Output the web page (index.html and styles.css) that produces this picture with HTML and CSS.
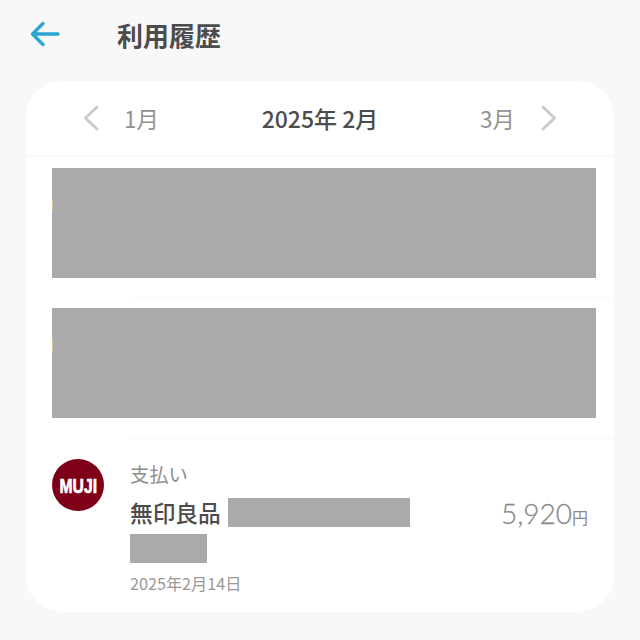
FILE: index.html
```html
<!DOCTYPE html>
<html lang="ja">
<head>
<meta charset="utf-8">
<title>利用履歴</title>
<link rel="stylesheet" href="styles.css">
</head>
<body>
<header class="topbar">
  <svg class="back" width="30" height="26" viewBox="0 0 30 26"><path d="M13 2.5 2.5 13 13 23.500M2.500 13H28"/></svg>
  <h1>利用履歴</h1>
</header>
<main class="card">
  <nav class="months">
    <svg class="chevron" width="16" height="26" viewBox="0 0 16 26"><path d="M14 2 2.500 13 14 24"/></svg>
    <span class="month prev">1月</span>
    <span class="current">2025年 2月</span>
    <span class="month next">3月</span>
    <svg class="chevron" width="16" height="26" viewBox="0 0 16 26"><path d="M2 2 13.500 13 2 24"/></svg>
  </nav>
  <section class="masked"><div class="mask"></div></section>
  <section class="masked"><div class="mask"></div></section>
  <section class="entry">
    <svg class="logo" width="52" height="52" viewBox="0 0 52 52"><circle cx="26" cy="26" r="26"/><text x="7.500" y="33.500" textLength="37.500" lengthAdjust="spacingAndGlyphs">MUJI</text></svg>
    <div class="details">
      <div class="kind">支払い</div>
      <div class="shop"><span>無印良品</span><span class="redact long"></span></div>
      <div class="redact short"></div>
      <div class="date">2025年2月14日</div>
    </div>
    <div class="amount">5,920<span class="yen">円</span></div>
  </section>
</main>
</body>
</html>
```
FILE: styles.css
```css
* { box-sizing: border-box; }
body {
  margin: 0;
  height: 640px;
  overflow: hidden;
  background: #f8f8f8;
  font-family: "Noto Sans CJK JP", sans-serif;
  color: #4c4c4c;
}
svg { display: block; flex: none; }
.topbar { display: flex; height: 81px; padding: 15px 0 0 30px; }
.back { margin-top: 6px; fill: none; stroke: #2ba5d3; stroke-width: 3.4; stroke-linecap: round; stroke-linejoin: round; }
h1 { margin: 0 0 0 57px; font-size: 26px; line-height: 40px; font-weight: 700; }
.card { width: 588px; height: 531px; margin-left: 26px; background: #fff; border-radius: 36px; overflow: hidden; }
.months { display: flex; align-items: center; height: 76px; padding: 0 57px; border-bottom: 2px solid #f9f9f9; white-space: nowrap; }
.chevron { fill: none; stroke: #cbcbcb; stroke-width: 3; stroke-linecap: round; stroke-linejoin: round; }
.month { width: 36px; font-size: 22.4px; line-height: 34px; color: #929292; }
.prev { margin-left: 25px; }
.next { margin-right: 25px; }
.current { flex: 1; text-align: center; font-size: 23px; line-height: 34px; padding-bottom: 1px; font-weight: 500; }
.masked { height: 140px; padding: 11px 18px 0 26px; }
.masked::after { content: ""; display: block; height: 2px; margin: 19px -18px 0 78px; background: #fbfbfb; }
.masked + .masked { height: 142px; padding-top: 12px; }
.masked + .masked .mask { margin-top: -1px; }
.masked + .masked::after { margin-top: 20px; }
.mask { height: 110px; background: linear-gradient(#d6c79c, #d6c79c) 0 31px / 1px 12px no-repeat #aaa; }
.redact { background: #aaa; }
.entry { display: flex; padding: 20px 26px 0; }
.logo { overflow: visible; }
.logo circle { fill: #7d0018; }
.logo text { fill: #fff; stroke: #fff; stroke-width: 0.7; font: 700 21px "Liberation Sans", sans-serif; }
.details { width: 330px; margin-left: 26px; }
.kind { padding-top: 1px; font-size: 19.3px; line-height: 28px; color: #8c8c8c; }
.shop { display: flex; align-items: center; height: 29px; margin-top: 10px; font-size: 22.7px; line-height: 29px; font-weight: 500; }
.long { width: 182px; height: 29px; margin-left: 7px; }
.short { width: 77px; height: 29px; margin-top: 7px; }
.date { margin-top: 8px; font-size: 16.2px; line-height: 24px; color: #999; }
.amount { margin: 37px 0 0 auto; font: 300 28px/34px Lato, sans-serif; color: #8a8a8a; -webkit-text-stroke: 0.3px #8a8a8a; white-space: nowrap; }
.yen { font: 400 16px/20px "Noto Sans CJK JP", sans-serif; -webkit-text-stroke: 0; }
```
